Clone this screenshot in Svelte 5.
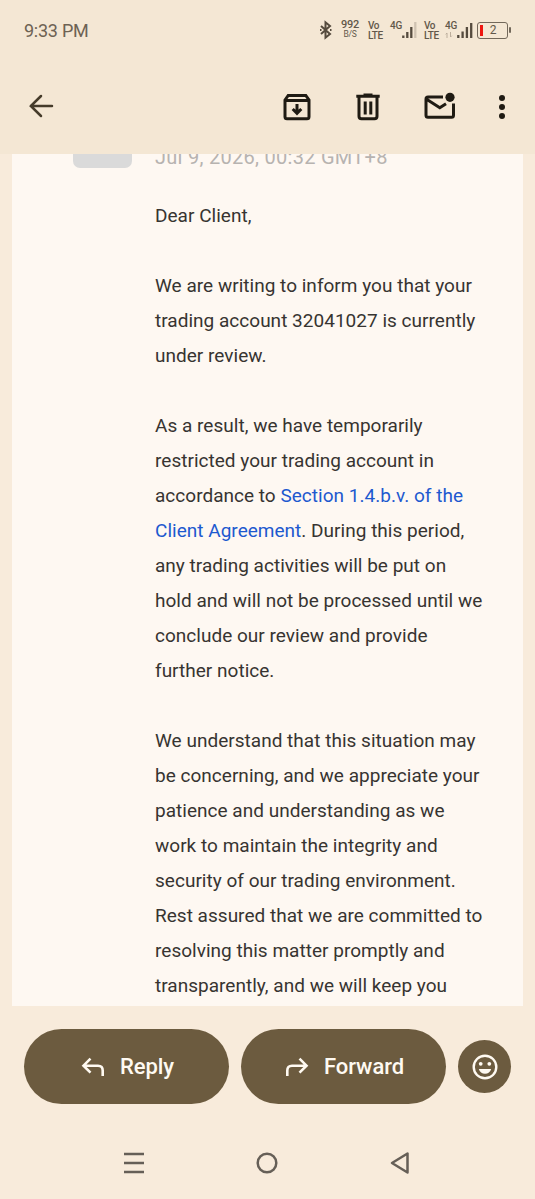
<script>
  const paragraphs = [
    ['Dear Client,'],
    ['We are writing to inform you that your', 'trading account 32041027 is currently', 'under review.'],
    [
      'As a result, we have temporarily',
      'restricted your trading account in',
      ['accordance to ', 'Section 1.4.b.v. of the', ''],
      ['', 'Client Agreement', '. During this period,'],
      'any trading activities will be put on',
      'hold and will not be processed until we',
      'conclude our review and provide',
      'further notice.'
    ],
    [
      'We understand that this situation may',
      'be concerning, and we appreciate your',
      'patience and understanding as we',
      'work to maintain the integrity and',
      'security of our trading environment.',
      'Rest assured that we are committed to',
      'resolving this matter promptly and',
      'transparently, and we will keep you'
    ]
  ];
</script>

<div class="screen">
  <header>
    <div class="status">
      <span class="time">9:33 PM</span>
      <div class="indicators">
        <svg class="bt" width="14" height="18" viewBox="0 0 14 18"><path d="M2 5l9 8-4.500 3.700V1.300L11 5l-9 8" /><path d="M1 9h1.500M11 9h1.500" /></svg>
        <div class="rate"><b>992</b><span>B/S</span></div>
        <div class="volte v1"><span>Vo</span><span>LTE</span></div>
        <span class="net n1">4G</span>
        <svg class="bars b1" width="15" height="16" viewBox="0 0 15 16"><path d="M1.300 13.500V16M5.300 10v6M9.300 5v11" /><path class="off" d="M13.300 0v16" /></svg>
        <div class="volte v2"><span>Vo</span><span>LTE</span></div>
        <div class="net n2"><span>4G</span><svg width="8" height="6" viewBox="0 0 8 6"><path d="M2 6V1L.7 2.300M5.500 0v5l1.300-1.300" /></svg></div>
        <svg class="bars b2" width="16" height="16" viewBox="0 0 16 16"><path d="M1.300 13v3M5.600 9.500V16M9.900 5v11M14.200 1v15" /></svg>
        <div class="battery"><i></i><span>2</span></div>
      </div>
    </div>
    <div class="toolbar">
      <svg class="back" width="26" height="26" viewBox="0 0 26 26"><path d="M24 13H2.800M13 3L2.800 13 13 23" /></svg>
      <div class="actions">
        <svg width="28" height="28" viewBox="0 0 28 28"><path d="M2 7l3.200-4.500h17.600L26 7v16.800a2 2 0 0 1-2 2H4a2 2 0 0 1-2-2zM2 7.400h24M14 11v9M9.700 16l4.300 4.300 4.300-4.300" /></svg>
        <svg width="28" height="28" viewBox="0 0 28 28"><path d="M2.300 3.300h23.400M9.500 2h9M5 3.500v19.800a2.500 2.500 0 0 0 2.500 2.500h13a2.500 2.500 0 0 0 2.500-2.500V3.500M11.200 8.500v13M16.800 8.500v13" /></svg>
        <svg width="32" height="28" viewBox="0 0 32 28"><path d="M19 4H4a2 2 0 0 0-2 2v16.300a2 2 0 0 0 2 2h23.500a2 2 0 0 0 2-2V10.500M3 6.500l12.800 8.200 6.200-4" /><circle cx="26" cy="4.300" r="4.600" /></svg>
        <svg class="more" width="8" height="28" viewBox="0 0 8 28"><circle cx="4" cy="5" r="3" /><circle cx="4" cy="14" r="3" /><circle cx="4" cy="23" r="3" /></svg>
      </div>
    </div>
  </header>

  <main>
    <div class="avatar"></div>
    <article>
      <div class="date">Jul 9, 2026, 00:32 GMT+8</div>
      {#each paragraphs as lines}
        <p>
          {#each lines as line}
            <span class="line">{#if Array.isArray(line)}{line[0]}<a href="#agreement">{line[1]}</a>{line[2]}{:else}{line}{/if}</span>
          {/each}
        </p>
      {/each}
    </article>
  </main>

  <footer>
    <button class="pill"><svg width="24" height="20" viewBox="0 0 24 20"><path d="M9.500 1.700L2.500 8.700l7 7M2.500 8.700H17q4.700 0 4.700 4.700V19" /></svg>Reply</button>
    <button class="pill fwd"><svg width="24" height="20" viewBox="0 0 24 20"><path d="M14.500 1.700l7 7-7 7M21.500 8.700H7q-4.700 0-4.700 4.700V19" /></svg>Forward</button>
    <button class="emoji" aria-label="React"><svg width="26" height="26" viewBox="0 0 26 26"><circle class="ring" cx="13" cy="13" r="11.300" /><circle cx="8.700" cy="9.800" r="1.900" /><circle cx="17.300" cy="9.800" r="1.900" /><path d="M6.800 15h12.400c-.8 3-3.200 4.800-6.200 4.800S7.600 18 6.800 15z" /></svg></button>
  </footer>

  <nav>
    <svg width="24" height="24" viewBox="0 0 24 24"><path d="M2 3h20M2 12h20M2 21h20" /></svg>
    <svg width="24" height="24" viewBox="0 0 24 24"><circle cx="12" cy="12" r="9.300" /></svg>
    <svg width="24" height="24" viewBox="0 0 24 24"><path d="M19.500 2.500v19L4 12z" /></svg>
  </nav>
</div>

<style>
  :global(body) { margin: 0; }
  .screen {
    width: 535px; height: 1199px; overflow: hidden;
    display: flex; flex-direction: column;
    background: #f8ebdb; font-family: Roboto, sans-serif;
  }
  svg { display: block; flex: none; fill: none; overflow: visible; }
  header { height: 154px; flex: none; background: #f4e7d4; }
  .status { height: 60px; display: flex; justify-content: space-between; padding: 0 24px; color: #6d6253; }
  .time { font-size: 18px; line-height: 61px; letter-spacing: -0.250px; }
  .indicators { display: flex; align-items: flex-start; color: #62584a; }
  .indicators svg { stroke: #554b3e; }
  .bt { margin-top: 21px; stroke-width: 2; }
  .rate { width: 18px; margin: 19px 0 0 8px; display: flex; flex-direction: column; align-items: center; font-size: 11px; line-height: 11px; letter-spacing: -0.300px; }
  .rate b { font-weight: 500; }
  .rate span { font-size: 8.500px; line-height: 8px; }
  .volte { width: 15px; display: flex; flex-direction: column; font-size: 10px; line-height: 9.500px; font-weight: 500; margin-top: 21px; letter-spacing: -0.400px; }
  .v1 { margin-left: 9px; }
  .v2 { margin-left: 7px; }
  .net { width: 13px; font-size: 10px; line-height: 10px; font-weight: 500; margin-top: 21px; letter-spacing: -0.300px; }
  .n1 { margin-left: 7px; }
  .n2 { margin-left: 6px; }
  .net svg { stroke: #bcae9c; stroke-width: 1; margin-top: 1px; }
  .bars { margin-top: 22px; stroke-width: 2.300; }
  .b1 { margin-left: -1px; }
  .b2 { margin-left: -1px; }
  .bars .off { stroke: #cfc2b1; }
  .battery { position: relative; box-sizing: border-box; width: 31px; height: 17px; margin: 22px 3px 0 4px; border: 1.500px solid #72685a; border-radius: 3px; display: flex; align-items: center; padding-left: 2px; font-size: 12px; line-height: 13px; }
  .battery::after { content: ''; position: absolute; right: -4px; top: 4px; width: 2px; height: 6px; background: #72685a; border-radius: 1px; }
  .battery i { width: 3px; height: 11px; background: #ee1711; }
  .battery span { flex: 1; text-align: center; padding-right: 4px; }
  .toolbar { height: 94px; display: flex; justify-content: space-between; align-items: flex-start; padding: 33px 29px 0 28px; box-sizing: border-box; }
  .back { stroke: #453b2a; stroke-width: 2.500; stroke-linecap: round; }
  .actions { display: flex; }
  .actions svg { stroke: #1f1b13; stroke-width: 3; }
  .actions svg + svg { margin-left: 43px; }
  .actions circle { fill: #1f1b13; stroke: none; }
  .actions svg:nth-child(3) { margin-left: 42px; }
  .actions svg.more { margin-left: 42px; }

  main { height: 852px; flex: none; box-sizing: border-box; margin: 0 12px; padding-left: 61px; background: #fef8f2; overflow: hidden; display: flex; align-items: flex-start; }
  .avatar { width: 59px; height: 14px; background: #dadada; border-radius: 0 0 7px 7px; }
  article { margin-left: 23px; color: #373431; font-size: 19px; line-height: 35px; white-space: nowrap; letter-spacing: 0.020px; }
  .date { height: 34px; margin-top: -14px; color: #b7b3b0; font-size: 20px; letter-spacing: 0.280px; }
  p { margin: 24px 0 0; }
  p + p { margin-top: 35px; }
  .line { display: block; }
  a { color: #1d59cf; text-decoration: none; }

  footer { display: flex; align-items: center; gap: 12px; height: 75px; margin: 23px 24px 0; flex: none; }
  button { border: 0; padding: 0; margin: 0; background: #6c5b3f; color: #fffaf2; display: flex; align-items: center; justify-content: center; font: 500 22px Roboto, sans-serif; }
  .pill { width: 205px; height: 75px; box-sizing: border-box; padding: 0 0 0 2px; border-radius: 37.500px; gap: 15px; letter-spacing: -0.050px; }
  .pill svg { stroke: #fffaf2; stroke-width: 2.600; }
  .emoji { width: 53px; height: 53px; border-radius: 50%; }
  .emoji svg { fill: #fffaf2; }
  .emoji .ring { fill: none; stroke: #fffaf2; stroke-width: 2.400; }

  nav { display: flex; justify-content: space-between; padding: 47px 123px 0 122px; }
  nav svg { stroke: #665f57; stroke-width: 2.500; stroke-linejoin: round; }
</style>
